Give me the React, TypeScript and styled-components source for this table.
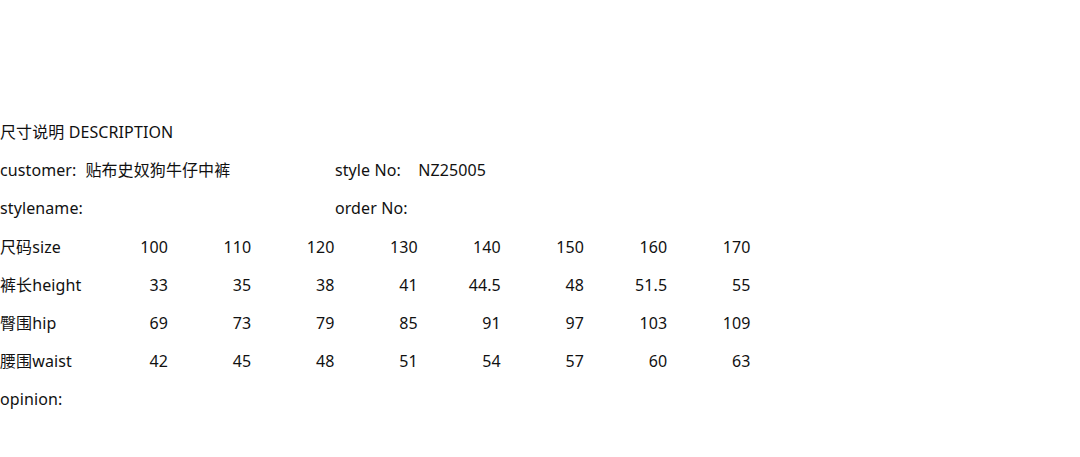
import React from 'react';
import styled, { createGlobalStyle } from 'styled-components';

const GlobalStyle = createGlobalStyle`
  html, body {
    margin: 0;
    padding: 0;
    background: #ffffff;
  }
  body {
    font-family: "Noto Sans", "Noto Sans CJK SC", sans-serif;
    color: #111111;
  }
`;

const Sheet = styled.div`
  padding-top: 113px;
  display: grid;
  grid-template-columns: 85.4px repeat(8, 83.2px);
  grid-auto-rows: 38.2px;
  font-size: 16px;
  letter-spacing: 0.1px;
`;

const Cell = styled.div<{ $span?: number; $right?: boolean }>`
  grid-column: span ${p => p.$span ?? 1};
  display: flex;
  align-items: center;
  justify-content: ${p => (p.$right ? 'flex-end' : 'flex-start')};
  padding-right: ${p => (p.$right ? 0.5 : 0)}px;
  white-space: nowrap;
  line-height: 1;
`;

const RowEnd = styled.div`
  grid-column: span 1;
`;

const sizes = ['100', '110', '120', '130', '140', '150', '160', '170'];

const measures: { label: string; values: string[] }[] = [
  { label: '裤长height', values: ['33', '35', '38', '41', '44.5', '48', '51.5', '55'] },
  { label: '臀围hip', values: ['69', '73', '79', '85', '91', '97', '103', '109'] },
  { label: '腰围waist', values: ['42', '45', '48', '51', '54', '57', '60', '63'] },
];

const App: React.FC = () => {
  return (
    <>
      <GlobalStyle />
      <Sheet>
        <Cell $span={9}>尺寸说明 DESCRIPTION</Cell>

        <Cell>customer:</Cell>
        <Cell $span={3}>贴布史奴狗牛仔中裤</Cell>
        <Cell>style No:</Cell>
        <Cell $span={4}>NZ25005</Cell>

        <Cell $span={4}>stylename:</Cell>
        <Cell $span={5}>order No:</Cell>

        <Cell>尺码size</Cell>
        {sizes.map(s => (
          <Cell key={s} $right>{s}</Cell>
        ))}

        {measures.map(m => (
          <React.Fragment key={m.label}>
            <Cell>{m.label}</Cell>
            {m.values.map((v, i) => (
              <Cell key={i} $right>{v}</Cell>
            ))}
          </React.Fragment>
        ))}

        <Cell $span={8}>opinion:</Cell>
        <RowEnd />
      </Sheet>
    </>
  );
};

export default App;
